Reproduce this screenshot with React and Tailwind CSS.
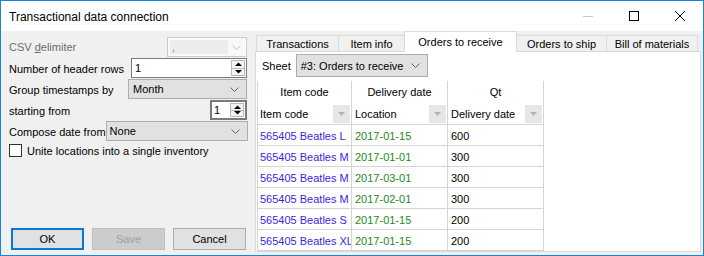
import React from "react";

const Chevron = ({ color = "#606060" }) => (
  <svg width="9" height="5" viewBox="0 0 9 5" className="block shrink-0">
    <path d="M0.5 0.5L4.5 4.5L8.5 0.5" fill="none" stroke={color} strokeWidth="1" />
  </svg>
);

const SpinButtons = () => (
  <div className="w-[15px] h-full flex flex-col py-[1px] pr-[1px] gap-0 shrink-0">
    <div className="flex-1 border border-[#b8b8b8] bg-[#f4f4f4] flex items-center justify-center">
      <svg width="7" height="4" viewBox="0 0 7 4" className="block">
        <path d="M0 4L3.5 0.5L7 4Z" fill="#000" />
      </svg>
    </div>
    <div className="flex-1 border border-t-0 border-[#b8b8b8] bg-[#f4f4f4] flex items-center justify-center">
      <svg width="7" height="4" viewBox="0 0 7 4" className="block">
        <path d="M0 0L3.5 3.5L7 0Z" fill="#000" />
      </svg>
    </div>
  </div>
);

const FilterBox = () => (
  <div className="ml-auto mr-[1px] w-[17px] h-[18px] bg-[#e6e6e6] flex items-center justify-center shrink-0">
    <svg width="7" height="4" viewBox="0 0 7 4" className="block">
      <path d="M0 0L7 0L3.5 4Z" fill="#b4b4b4" />
    </svg>
  </div>
);

const rows = [
  ["565405 Beatles L", "2017-01-15", "600"],
  ["565405 Beatles M", "2017-01-01", "300"],
  ["565405 Beatles M", "2017-03-01", "300"],
  ["565405 Beatles M", "2017-02-01", "300"],
  ["565405 Beatles S", "2017-01-15", "200"],
  ["565405 Beatles XL", "2017-01-15", "200"],
];

export default function App() {
  return (
    <div className="w-[704px] h-[256px] border border-[#1883d7] bg-[#f0f0f0] flex flex-col overflow-hidden font-['Liberation_Sans',Arial,sans-serif] text-[11px] text-black leading-none">
      {/* Title bar */}
      <div className="h-[30px] bg-white flex items-center shrink-0">
        <span className="pl-[8px] pt-[1px] flex-1 text-[12px]">Transactional data connection</span>
        <div className="w-[46px] h-[30px] flex items-center justify-center">
          <div className="w-[10px] h-px bg-[#c8c8c8]" />
        </div>
        <div className="w-[46px] h-[30px] flex items-center justify-center">
          <div className="w-[10px] h-[10px] border border-black" />
        </div>
        <div className="w-[46px] h-[30px] flex items-center justify-center">
          <svg width="10" height="10" viewBox="0 0 10 10" className="block">
            <path d="M0 0L10 10M10 0L0 10" stroke="#000" strokeWidth="1" />
          </svg>
        </div>
      </div>

      {/* Body */}
      <div className="flex-1 flex min-h-0">
        {/* Left panel */}
        <div className="w-[254px] shrink-0 flex flex-col px-[8px] pt-[6px] pb-[5px] whitespace-nowrap">
          <div className="h-[21px] flex items-start justify-between">
            <span className="h-[20px] pt-[1px] flex items-center text-[#6d6d6d]">
              CSV&nbsp;<span className="underline">d</span>elimiter
            </span>
            <div className="w-[80px] h-[20px] border border-[#cccccc] bg-[#f9f9f9] flex items-center pl-[2px] pr-[5px] shrink-0">
              <div className="w-[58px] h-[14px] bg-[#ececec] flex items-end pl-[2px] pb-[1px] text-[#8a8a8a]">,</div>
              <div className="ml-auto">
                <Chevron color="#c4c4c4" />
              </div>
            </div>
          </div>
          <div className="h-[21px] flex items-start justify-between">
            <span className="h-[20px] pt-[2px] flex items-center">Number of header rows</span>
            <div className="w-[116px] h-[20px] border border-[#7a7a7a] bg-white flex items-center shrink-0">
              <span className="flex-1 pl-[3px] pt-[1px]">1</span>
              <SpinButtons />
            </div>
          </div>
          <div className="h-[21px] flex items-start justify-between">
            <span className="h-[20px] pt-[2px] flex items-center">Group timestamps by</span>
            <div className="w-[119px] h-[20px] border border-[#adadad] bg-[#e1e1e1] flex items-center pl-[4px] pr-[7px] shrink-0">
              <span className="flex-1 pt-[1px]">Month</span>
              <Chevron />
            </div>
          </div>
          <div className="h-[21px] flex items-start justify-between">
            <span className="h-[20px] pt-[2px] flex items-center">starting from</span>
            <div className="w-[37px] h-[20px] border-2 border-[#7a7a7a] bg-white flex items-center shrink-0">
              <span className="flex-1 pl-[2px] pt-[1px]">1</span>
              <SpinButtons />
            </div>
          </div>
          <div className="h-[21px] flex items-start justify-between">
            <span className="h-[20px] pt-[2px] flex items-center">Compose date from</span>
            <div className="w-[142px] h-[20px] border border-[#adadad] bg-[#e1e1e1] flex items-center pl-[3px] pr-[7px] shrink-0">
              <span className="flex-1 pt-[1px]">None</span>
              <Chevron />
            </div>
          </div>
          <div className="mt-[2px] flex items-center gap-[5px]">
            <div className="w-[13px] h-[13px] border border-[#333333] bg-white shrink-0" />
            <span className="pt-[1px]">Unite locations into a single inventory</span>
          </div>

          <div className="mt-auto flex gap-[8px] pl-[2px]">
            <div className="w-[73px] h-[22px] border-2 border-[#0078d7] bg-[#e1e1e1] flex items-center justify-center pt-[1px]">
              OK
            </div>
            <div className="w-[73px] h-[22px] border border-[#bfbfbf] bg-[#cccccc] text-[#a0a0a0] flex items-center justify-center pt-[1px]">
              Save
            </div>
            <div className="w-[73px] h-[22px] border border-[#adadad] bg-[#e1e1e1] flex items-center justify-center pt-[1px]">
              Cancel
            </div>
          </div>
        </div>

        {/* Right panel */}
        <div className="flex-1 flex flex-col pr-[2px] pb-[3px] min-w-0 whitespace-nowrap">
          <div className="h-[20px] flex items-end pl-[1px] relative z-10 shrink-0">
            <div className="w-[83px] h-[16px] border-t border-l border-r border-[#d9d9d9] flex items-center justify-center pt-[1px]">
              Transactions
            </div>
            <div className="w-[66px] h-[16px] border-t border-r border-[#d9d9d9] flex items-center justify-center pt-[1px]">
              Item info
            </div>
            <div className="w-[113px] h-[21px] -ml-[1px] -mb-px border-t border-l border-r border-[#d9d9d9] bg-white flex items-center justify-center">
              Orders to receive
            </div>
            <div className="w-[90px] h-[16px] border-t border-r border-[#d9d9d9] flex items-center justify-center pt-[1px]">
              Orders to ship
            </div>
            <div className="w-[91px] h-[16px] border-t border-r border-[#d9d9d9] flex items-center justify-center pt-[1px]">
              Bill of materials
            </div>
          </div>

          <div className="flex-1 border border-[#d9d9d9] bg-white flex flex-col min-h-0">
            <div className="mt-[2px] h-[23px] flex items-center pl-[6px] shrink-0">
              <span className="pt-[1px]">Sheet</span>
              <div className="ml-[5px] w-[132px] h-full border border-[#adadad] bg-[#e1e1e1] flex items-center pl-[4px] pr-[7px]">
                <span className="flex-1 pt-[1px]">#3: Orders to receive</span>
                <Chevron />
              </div>
            </div>

            <div className="mt-[4px] ml-[1px] flex-1 flex flex-col overflow-hidden">
              <div className="h-[22px] flex shrink-0">
                <div className="w-[95px] border-l border-r border-[#d5d5d5] flex items-center justify-center pt-[1px]">Item code</div>
                <div className="w-[96px] border-r border-[#d5d5d5] flex items-center justify-center pt-[1px]">Delivery date</div>
                <div className="w-[96px] border-r border-[#d5d5d5] flex items-center justify-center pt-[1px]">Qt</div>
              </div>
              <div className="h-[22px] flex shrink-0">
                <div className="w-[95px] border-l border-r border-b border-[#d5d5d5] flex items-center pl-[2px]">
                  <span className="pt-[2px]">Item code</span>
                  <FilterBox />
                </div>
                <div className="w-[96px] border-r border-b border-[#d5d5d5] flex items-center pl-[3px]">
                  <span className="pt-[2px]">Location</span>
                  <FilterBox />
                </div>
                <div className="w-[96px] border-r border-b border-[#d5d5d5] flex items-center pl-[3px]">
                  <span className="pt-[2px]">Delivery date</span>
                  <FilterBox />
                </div>
              </div>
              {rows.map((r, i) => (
                <div key={i} className="h-[21px] flex shrink-0">
                  <div className="w-[95px] border-l border-r border-b border-[#d5d5d5] flex items-center pl-[2px] pt-[2px] text-[#3a1fe0] overflow-hidden">
                    {r[0]}
                  </div>
                  <div className="w-[96px] border-r border-b border-[#d5d5d5] flex items-center pl-[3px] pt-[2px] text-[#1c8a1c]">
                    {r[1]}
                  </div>
                  <div className="w-[96px] border-r border-b border-[#d5d5d5] flex items-center pl-[3px] pt-[2px]">
                    {r[2]}
                  </div>
                </div>
              ))}
            </div>
          </div>
        </div>
      </div>
    </div>
  );
}
